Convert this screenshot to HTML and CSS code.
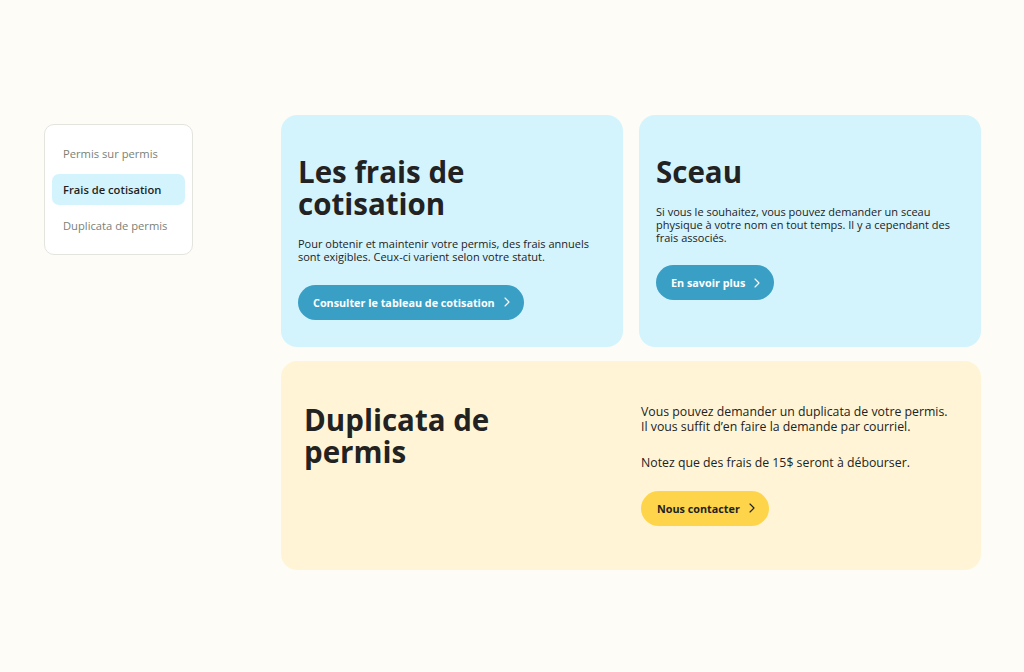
FILE: index.html
```html
<!DOCTYPE html>
<html lang="fr">
<head>
<meta charset="utf-8">
<title>Frais</title>
<link rel="stylesheet" href="styles.css">
</head>
<body>
<div class="page">
  <nav class="side">
    <a class="side-item">Permis sur permis</a>
    <a class="side-item active">Frais de cotisation</a>
    <a class="side-item">Duplicata de permis</a>
  </nav>
  <main class="grid">
    <section class="card blue">
      <h2 class="title">Les frais de cotisation</h2>
      <p class="text">Pour obtenir et maintenir votre permis, des frais annuels sont exigibles. Ceux-ci varient selon votre statut.</p>
      <a class="btn btn-blue">Consulter le tableau de cotisation
        <svg class="chev" viewBox="0 0 6 10" width="6" height="10"><polyline points="1,1 5,5 1,9" fill="none" stroke="currentColor" stroke-width="1.1" stroke-linecap="round" stroke-linejoin="round"/></svg>
      </a>
    </section>
    <section class="card blue">
      <h2 class="title">Sceau</h2>
      <p class="text">Si vous le souhaitez, vous pouvez demander un sceau physique à votre nom en tout temps. Il y a cependant des frais associés.</p>
      <a class="btn btn-blue">En savoir plus
        <svg class="chev" viewBox="0 0 6 10" width="6" height="10"><polyline points="1,1 5,5 1,9" fill="none" stroke="currentColor" stroke-width="1.1" stroke-linecap="round" stroke-linejoin="round"/></svg>
      </a>
    </section>
    <section class="card yellow wide">
      <h2 class="title">Duplicata de permis</h2>
      <div class="col">
        <p class="text big">Vous pouvez demander un duplicata de votre permis. Il vous suffit d’en faire la demande par courriel.</p>
        <p class="text big">Notez que des frais de 15$ seront à débourser.</p>
        <a class="btn btn-yellow">Nous contacter
          <svg class="chev" viewBox="0 0 6 10" width="6" height="10"><polyline points="1,1 5,5 1,9" fill="none" stroke="currentColor" stroke-width="1.1" stroke-linecap="round" stroke-linejoin="round"/></svg>
        </a>
      </div>
    </section>
  </main>
</div>
</body>
</html>
```
FILE: styles.css
```css
* { box-sizing: border-box; }
html, body { margin: 0; padding: 0; }
body {
  background: #fdfcf7;
  font-family: "Open Sans", "Noto Sans", sans-serif;
  color: #222;
  width: 1024px;
  height: 672px;
  overflow: hidden;
}
.page {
  display: flex;
  align-items: flex-start;
  padding: 115px 0 0 44px;
  gap: 88px;
}
.side {
  width: 149px;
  margin-top: 9px;
  background: #fff;
  border: 1px solid #e4e4df;
  border-radius: 10px;
  padding: 13px 7px;
  display: flex;
  flex-direction: column;
  gap: 5px;
}
.side-item {
  display: flex;
  align-items: center;
  height: 31px;
  padding: 0 11px;
  border-radius: 7px;
  font-size: 11.2px;
  color: #7b8176;
}
.side-item.active {
  background: #d4f4fd;
  color: #1f1f1f;
  font-weight: 600;
}
.grid {
  width: 700px;
  display: grid;
  grid-template-columns: 1fr 1fr;
  column-gap: 16px;
  row-gap: 14px;
}
.card {
  border-radius: 16px;
  padding: 41px 17px 27px;
  display: flex;
  flex-direction: column;
  align-items: flex-start;
}
.blue { background: #d4f4fd; }
.yellow { background: #fff5d6; }
.wide {
  grid-column: 1 / 3;
  display: grid;
  grid-template-columns: 1fr 1fr;
  column-gap: 20px;
  align-items: start;
  padding: 43px 23px 44px;
}
.title {
  margin: 0;
  font-size: 29.5px;
  line-height: 32px;
  font-weight: 700;
  color: #222;
}
.wide .title { max-width: 260px; }
.text {
  margin: 18px 0 0;
  font-size: 11px;
  line-height: 12.8px;
  color: #222;
}
.text.big {
  margin: 0 0 21px;
  max-width: 310px;
  font-size: 12.3px;
  line-height: 15px;
}
.col { display: flex; flex-direction: column; align-items: flex-start; }
.btn {
  margin-top: 21px;
  height: 35px;
  border-radius: 18px;
  padding: 0 14px 0 15px;
  display: inline-flex;
  align-items: center;
  gap: 9px;
  font-size: 10.8px;
  font-weight: 700;
}
.col .btn { margin-top: 0; padding-left: 16px; }
.btn-blue { background: #3a9fc5; color: #fff; }
.btn-yellow { background: #fed54a; color: #1f1f1f; }
.chev { display: block; }
```
